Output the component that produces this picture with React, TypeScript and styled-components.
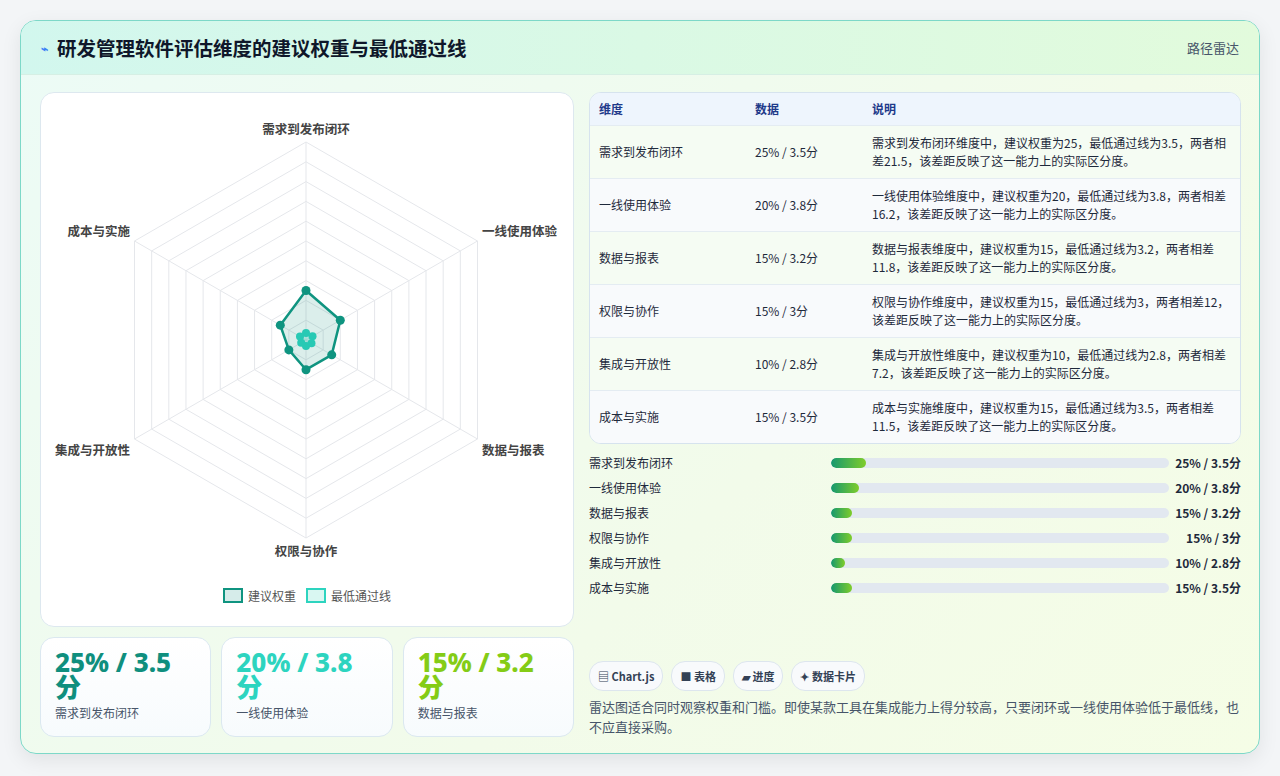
import React from "react";
import styled, { createGlobalStyle } from "styled-components";

const G = createGlobalStyle`
  html,body{margin:0;padding:0;background:#f3f5f7;}
  body{font-family:"Noto Sans CJK SC","Noto Sans",sans-serif;}
`;
const Shell = styled.div`padding:20px 20px 22px 20px;`;
const Card = styled.div`
  height:734px;box-sizing:border-box;border:1px solid #7dd8c8;border-radius:16px;overflow:hidden;
  background:linear-gradient(135deg,#ecfbf6 0%,#f2fbea 60%,#f5fde6 100%);
  box-shadow:0 6px 20px rgba(0,0,0,.08);display:flex;flex-direction:column;
`;
const Head = styled.div`
  height:55px;display:flex;align-items:center;justify-content:space-between;padding:0 20px;
  background:linear-gradient(90deg,#d2f7ee,#e2fbdc);border-bottom:1px solid #d6efe4;
`;
const Title = styled.h1`margin:0;font-size:19.5px;font-weight:700;color:#0f172a;display:flex;align-items:center;gap:9px;`;
const Tag = styled.span`font-size:13px;color:#475569;`;
const Body = styled.div`flex:1;display:grid;grid-template-columns:534px 652px;gap:15px;padding:17px 18px 16px 19px;`;
const Col = styled.div<{gap:number}>`display:flex;flex-direction:column;gap:${p=>p.gap}px;`;
const Panel = styled.div`background:#fff;border:1px solid #dde8ef;border-radius:14px;height:533px;display:flex;flex-direction:column;align-items:center;`;
const Legend = styled.div`display:flex;gap:10px;font-size:12px;color:#555;margin-top:-6px;`;
const LI = styled.span`display:flex;align-items:center;gap:5px;`;
const Sw = styled.span<{c:string;b:string}>`width:16px;height:11px;border:2.5px solid ${p=>p.b};background:${p=>p.c};`;
const Stats = styled.div`display:grid;grid-template-columns:repeat(3,1fr);gap:10px;`;
const Stat = styled.div`height:100px;box-sizing:border-box;border:1px solid #dbe8f0;border-radius:14px;background:linear-gradient(180deg,#fff,#f7fbfd);padding:12px 14px;`;
const Big = styled.div<{c:string}>`font-size:26px;font-weight:800;line-height:25px;color:${p=>p.c};font-family:"Noto Sans","Noto Sans CJK SC",sans-serif;max-width:130px;`;
const SL = styled.div`font-size:12px;color:#475569;margin-top:4px;`;
const Table = styled.div`border:1px solid #d6e3ee;border-radius:12px;overflow:hidden;background:#fff;`;
const Row = styled.div<{bg:string;h:number}>`display:grid;grid-template-columns:156px 117px 1fr;height:${p=>p.h}px;align-items:center;padding-left:9px;background:${p=>p.bg};border-top:1px solid #e4ecf2;font-size:12px;color:#1e293b;line-height:18px;&:first-child{border-top:0;}`;
const Th = styled.span`font-weight:700;color:#1e3a8a;`;
const Bars = styled.div`display:flex;flex-direction:column;gap:9px;margin-top:10px;`;
const BarRow = styled.div`display:grid;grid-template-columns:242px 1fr 72px;align-items:center;font-size:12px;color:#1e293b;height:16px;`;
const Track = styled.div`height:10px;border-radius:5px;background:#e2e8f0;overflow:hidden;`;
const Fill = styled.div`height:100%;border-radius:5px;background:linear-gradient(90deg,#15986f,#7fcd2a);`;
const Val = styled.span`font-weight:700;text-align:right;`;
const Chips = styled.div`display:flex;gap:8px;margin-top:auto;`;
const Chip = styled.span`font-size:11px;font-weight:700;color:#334155;border:1px solid #dde6ee;border-radius:14px;background:#f8fafc;padding:6px 8px;`;
const Note = styled.p`margin:6px 0 0;font-size:13px;color:#475569;line-height:20px;`;

const dims=["需求到发布闭环","一线使用体验","数据与报表","权限与协作","集成与开放性","成本与实施"];
const w=[25,20,15,15,10,15];const s=[3.5,3.8,3.2,3,2.8,3.5];
const vals=["25% / 3.5分","20% / 3.8分","15% / 3.2分","15% / 3分","10% / 2.8分","15% / 3.5分"];
const cx=266,cy=247,R=198;
const pt=(i:number,r:number)=>{const a=-Math.PI/2+i*Math.PI/3;return [cx+r*Math.cos(a),cy+r*Math.sin(a)];};
const poly=(r:(i:number)=>number)=>dims.map((_,i)=>pt(i,r(i)).join(",")).join(" ");

function Radar(){
  const lab=[[266,41,"middle"],[442,143,"start"],[442,362,"start"],[266,463,"middle"],[90,362,"end"],[90,143,"end"]] as const;
  return <svg width="534" height="500" viewBox="0 0 534 500">
    {Array.from({length:10},(_,k)=><polygon key={k} points={poly(()=>R*(k+1)/10)} fill="none" stroke="#e5e7eb"/>)}
    {dims.map((_,i)=>{const [x,y]=pt(i,R);return <line key={i} x1={cx} y1={cy} x2={x} y2={y} stroke="#e5e7eb"/>})}
    <polygon points={poly(i=>R*s[i]/100)} fill="rgba(45,212,191,.25)" stroke="#2dd4bf" strokeWidth="2"/>
    {dims.map((_,i)=>{const [x,y]=pt(i,R*s[i]/100);return <circle key={"s"+i} cx={x} cy={y} r="4" fill="#2dd4bf"/>})}
    <polygon points={poly(i=>R*w[i]/100)} fill="rgba(15,140,120,.15)" stroke="#0f9480" strokeWidth="2.5"/>
    {dims.map((_,i)=>{const [x,y]=pt(i,R*w[i]/100);return <circle key={"w"+i} cx={x} cy={y} r="4.5" fill="#0f9480"/>})}
    {lab.map(([x,y,a],i)=><text key={i} x={x} y={y} textAnchor={a} fontSize="12.5" fill="#444" fontWeight="600" fontFamily="Noto Sans CJK SC">{dims[i]}</text>)}
  </svg>;
}

export default function App(){
  const rows=dims.map((d,i)=>[d,vals[i],`${d}维度中，建议权重为${w[i]}，最低通过线为${s[i]}，两者相差${+(w[i]-s[i]).toFixed(1)}，该差距反映了这一能力上的实际区分度。`]);
  return <Shell><G/><Card>
    <Head><Title><span style={{color:"#3b82f6",fontSize:12}}>⌁</span>研发管理软件评估维度的建议权重与最低通过线</Title><Tag>路径雷达</Tag></Head>
    <Body>
      <Col gap={10}>
        <Panel><Radar/><Legend><LI><Sw c="#d6ecea" b="#0f9480"/>建议权重</LI><LI><Sw c="#d9f7f2" b="#2dd4bf"/>最低通过线</LI></Legend></Panel>
        <Stats>
          {[["#0f8f7e",0],["#2dd4bf",1],["#84cc16",2]].map(([c,i])=><Stat key={i as number}><Big c={c as string}>{vals[i as number]}</Big><SL>{dims[i as number]}</SL></Stat>)}
        </Stats>
      </Col>
      <Col gap={0}>
        <Table>
          <Row bg="#eef5fd" h={32}><Th>维度</Th><Th>数据</Th><Th>说明</Th></Row>
          {rows.map((r,i)=><Row key={i} h={52} bg={i%2?"#f8fafc":"#f5fcf3"}><span>{r[0]}</span><span>{r[1]}</span><span style={{paddingRight:10}}>{r[2]}</span></Row>)}
        </Table>
        <Bars>{dims.map((d,i)=><BarRow key={i}><span>{d}</span><Track><Fill style={{width:`${w[i]*0.42}%`}}/></Track><Val>{vals[i]}</Val></BarRow>)}</Bars>
        <Chips><Chip>▤ Chart.js</Chip><Chip>■ 表格</Chip><Chip>▰ 进度</Chip><Chip>✦ 数据卡片</Chip></Chips>
        <Note>雷达图适合同时观察权重和门槛。即使某款工具在集成能力上得分较高，只要闭环或一线使用体验低于最低线，也不应直接采购。</Note>
      </Col>
    </Body>
  </Card></Shell>;
}
